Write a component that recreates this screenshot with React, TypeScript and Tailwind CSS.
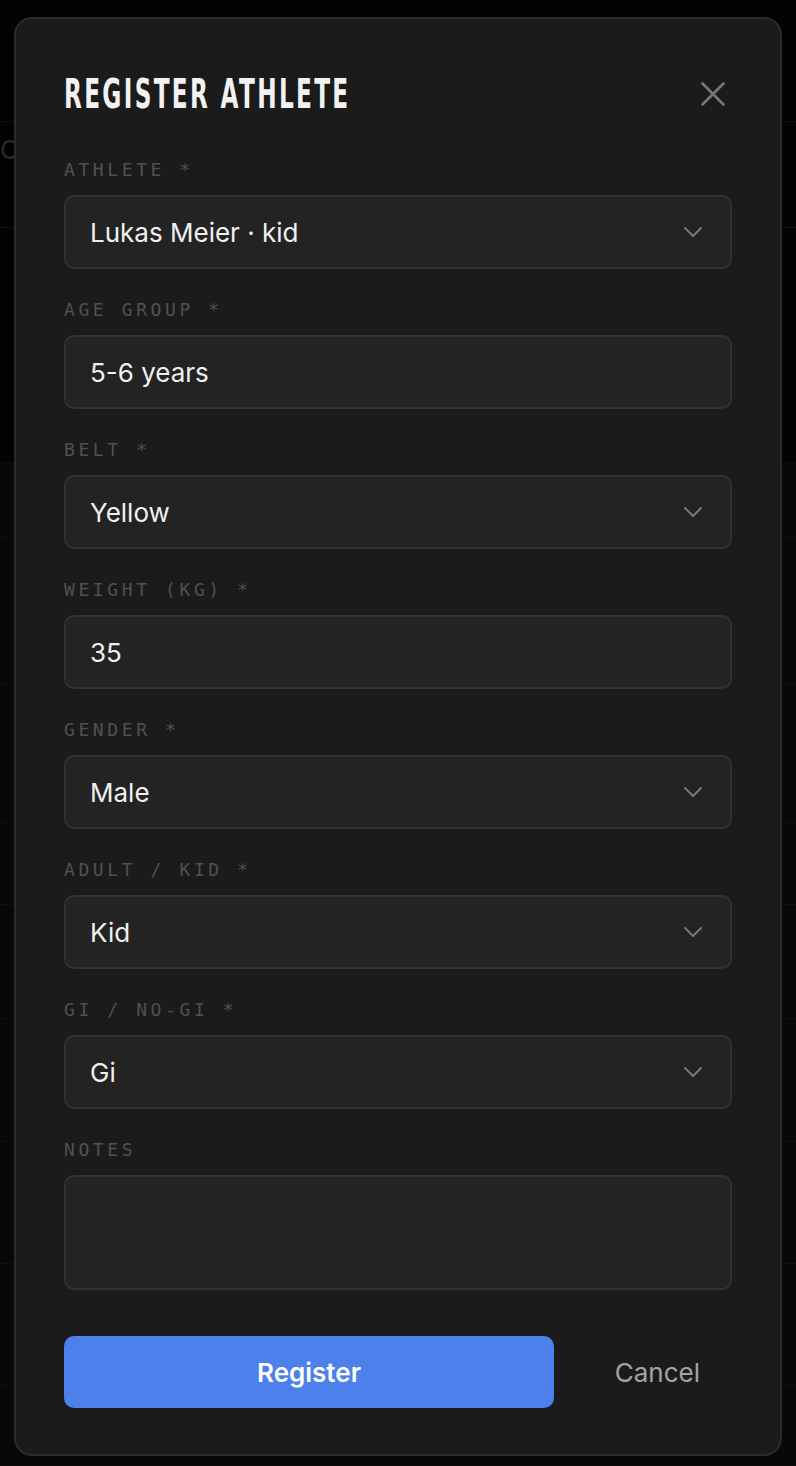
import React from "react";

const fields = [
  { label: "Athlete *", value: "Lukas Meier · kid", select: true },
  { label: "Age group *", value: "5-6 years", select: false },
  { label: "Belt *", value: "Yellow", select: true },
  { label: "Weight (kg) *", value: "35", select: false },
  { label: "Gender *", value: "Male", select: true },
  { label: "Adult / Kid *", value: "Kid", select: true },
  { label: "Gi / No-Gi *", value: "Gi", select: true },
];

// faint table rows behind the overlay
const rows = [
  "h-[122px]", "h-[106px]", "h-[235px]", "h-[75px]", "h-[147px]", "h-[138px]",
  "h-[82px]", "h-[114px]", "h-[123px]", "h-[122px]", "h-[122px]", "h-[80px]",
];

function Chevron() {
  return (
    <svg width="18" height="10" viewBox="0 0 18 10" fill="none" className="text-[#76767c]">
      <path d="M1 1l8 8 8-8" stroke="currentColor" strokeWidth="2" strokeLinecap="round" strokeLinejoin="round" />
    </svg>
  );
}

export default function App() {
  return (
    <div className="relative min-h-[1466px] w-full overflow-hidden bg-[#030303] font-['Inter',sans-serif]">
      {/* Page behind the dialog */}
      <div className="flex flex-col">
        {rows.map((h, i) => (
          <div
            key={i}
            className={`${h} border-b border-[#101010] ${i > 2 ? "bg-[#080808]" : "bg-[#030303]"}`}
          >
            {i === 1 && (
              <span className="mt-[12px] block text-[26px] leading-8 text-[#2a2a2a]">O</span>
            )}
          </div>
        ))}
      </div>

      {/* Dialog */}
      <div className="absolute left-[14px] top-[17px] w-[768px] rounded-[18px] border-2 border-[#2b2b2b] bg-[#1b1b1b] px-12 pb-[46px] pt-[55px]">
        <div className="flex h-10 items-center justify-between">
          <h2 className="inline-block origin-left scale-x-[0.58] whitespace-nowrap font-['DejaVu_Sans',sans-serif] text-[40px] font-bold uppercase leading-none tracking-[0.1em] text-[#f2f2f2]">
            Register Athlete
          </h2>
          <button className="mr-[7px] text-[#77777c]">
            <svg width="24" height="24" viewBox="0 0 24 24" fill="none">
              <path d="M1.5 1.5l21 21M22.5 1.5l-21 21" stroke="currentColor" strokeWidth="2.6" strokeLinecap="round" />
            </svg>
          </button>
        </div>

        <div className="mt-[44px] flex flex-col gap-[29px]">
          {fields.map((f) => (
            <div key={f.label} className="flex flex-col gap-[13px]">
              <label className="h-6 font-['DejaVu_Sans_Mono',monospace] text-[18px] uppercase leading-6 tracking-[0.2em] text-[#505056]">
                {f.label}
              </label>
              <div className="flex h-[74px] items-center justify-between rounded-[10px] border-2 border-[#313131] bg-[#232323] pl-6 pr-[28px]">
                <span className="text-[26px] text-[#f0f0f0]">{f.value}</span>
                {f.select && <Chevron />}
              </div>
            </div>
          ))}
          <div className="flex flex-col gap-[13px]">
            <label className="h-6 font-['DejaVu_Sans_Mono',monospace] text-[18px] uppercase leading-6 tracking-[0.2em] text-[#505056]">
              Notes
            </label>
            <div className="h-[115px] rounded-[10px] border-2 border-[#313131] bg-[#232323]" />
          </div>
        </div>

        <div className="mt-[46px] flex items-center">
          <button className="h-[72px] w-[490px] rounded-[10px] bg-[#4c80ea] text-[26px] font-semibold text-white">
            Register
          </button>
          <button className="ml-auto pl-8 pr-[32px] text-[26px] text-[#a3a3a8]">Cancel</button>
        </div>
      </div>
    </div>
  );
}
